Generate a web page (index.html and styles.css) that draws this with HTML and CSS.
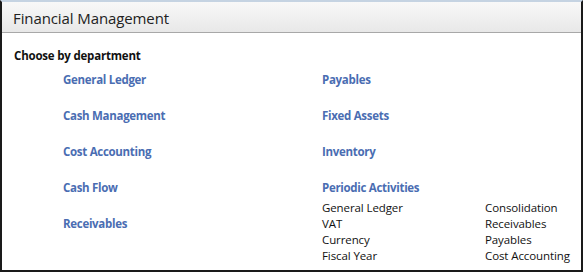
FILE: index.html
```html
<!DOCTYPE html>
<html>
<head>
<meta charset="utf-8">
<link rel="stylesheet" href="styles.css">
</head>
<body>
<div class="panel">
  <div class="header">Financial Management</div>
  <div class="content">
    <div class="section-title">Choose by department</div>
    <div class="grid">
      <div class="col">
        <a class="link" href="#">General Ledger</a>
        <a class="link" href="#">Cash Management</a>
        <a class="link" href="#">Cost Accounting</a>
        <a class="link" href="#">Cash Flow</a>
        <a class="link" href="#">Receivables</a>
      </div>
      <div class="col">
        <a class="link" href="#">Payables</a>
        <a class="link" href="#">Fixed Assets</a>
        <a class="link" href="#">Inventory</a>
        <a class="link link-group" href="#">Periodic Activities</a>
        <div class="sub">
          <div class="sub-col">
            <span>General Ledger</span>
            <span>VAT</span>
            <span>Currency</span>
            <span>Fiscal Year</span>
          </div>
          <div class="sub-col">
            <span>Consolidation</span>
            <span>Receivables</span>
            <span>Payables</span>
            <span>Cost Accounting</span>
          </div>
        </div>
      </div>
    </div>
  </div>
</div>
</body>
</html>
```

FILE: styles.css
```css
* { box-sizing: border-box; }
html, body { margin: 0; padding: 0; background: #fff; }
body { font-family: "Open Sans", "Noto Sans", sans-serif; }

.panel {
  width: 583px;
  height: 272px;
  border: 2px solid #1a1a1a;
  border-top: 2px solid #c5d3e2;
  background: #fff;
  overflow: hidden;
}

.header {
  height: 31px;
  background: linear-gradient(#f8f8f8, #e8e8e8);
  border-bottom: 1px solid #a8a8a8;
  padding: 6px 0 0 11px;
  font-size: 15px;
  color: #222;
  letter-spacing: -0.1px;
}

.content {
  padding: 14px 0 0 12px;
}

.section-title {
  font-size: 11.5px;
  font-weight: 700;
  color: #111;
  line-height: 18px;
  letter-spacing: -0.2px;
}

.grid {
  display: grid;
  grid-template-columns: 259px 1fr;
  padding-left: 49px;
  margin-top: 6px;
}

.col {
  display: flex;
  flex-direction: column;
}

.link {
  display: block;
  height: 36px;
  line-height: 16px;
  padding-top: 1px;
  font-size: 11.5px;
  font-weight: 700;
  color: #4a6db2;
  text-decoration: none;
  letter-spacing: -0.3px;
}

.link-group { height: 21px; }

.sub {
  display: grid;
  grid-template-columns: 163px 1fr;
}

.sub-col {
  display: flex;
  flex-direction: column;
}

.sub-col span {
  font-size: 11.5px;
  line-height: 16px;
  color: #111;
  letter-spacing: -0.1px;
}
```
